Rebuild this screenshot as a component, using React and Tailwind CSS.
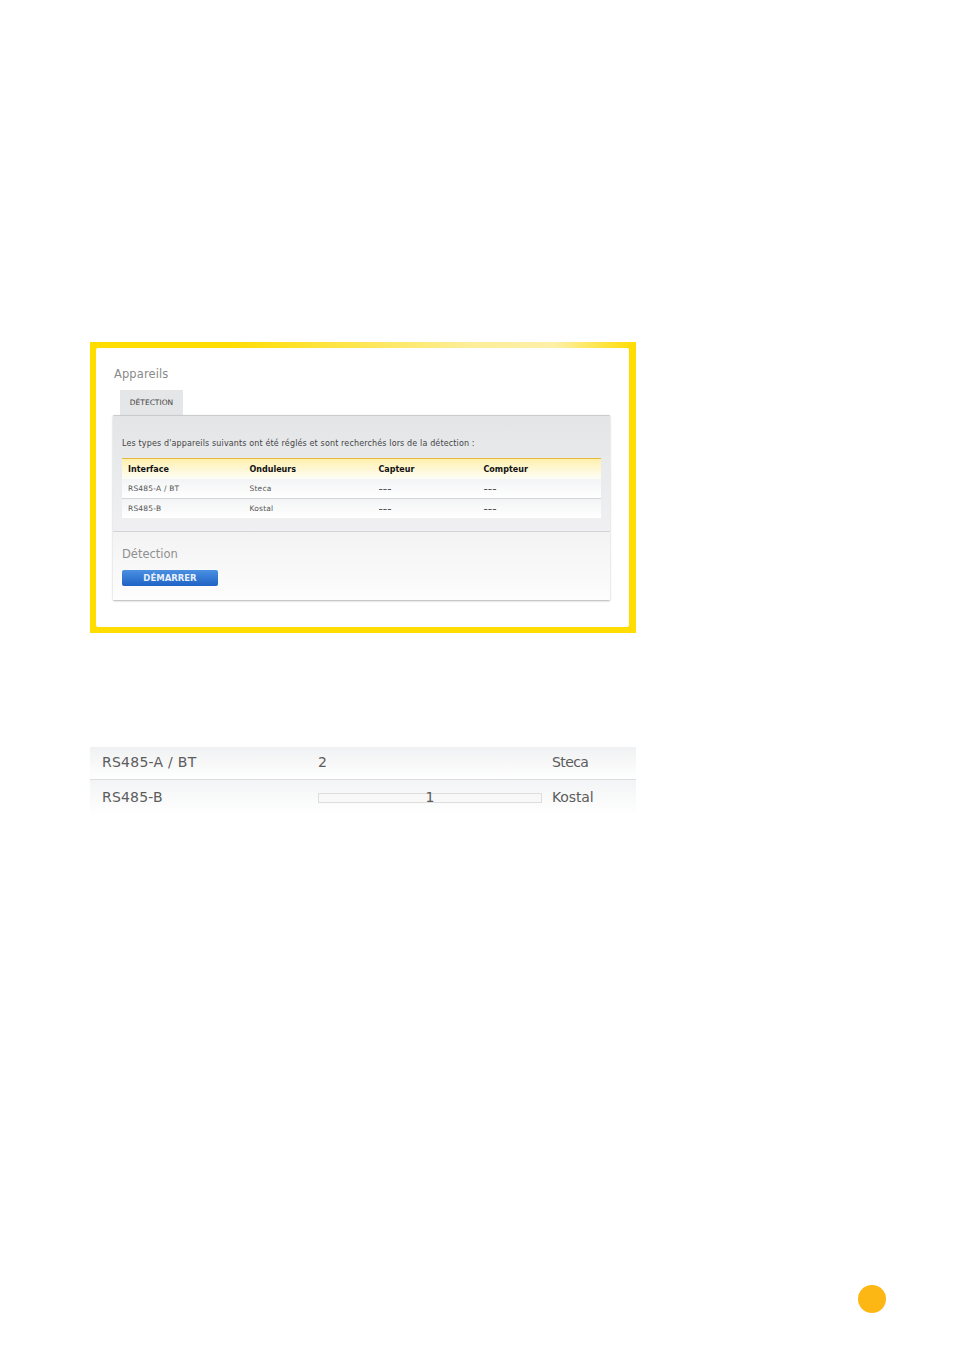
const FONT = "font-['DejaVu_Sans',sans-serif]";

const detectedDevices = [
  { iface: "RS485-A / BT", inverter: "Steca", sensor: "---", meter: "---" },
  { iface: "RS485-B", inverter: "Kostal", sensor: "---", meter: "---" },
];

const DeviceRow = ({ device, last }) => (
  <div
    className={`flex items-center bg-gradient-to-b from-[#f3f4f5] to-white text-[7.5px] tracking-[0.2px] text-[#555] ${
      last ? "h-[19px]" : "h-[20px] border-b border-[#d4d5d7]"
    }`}
  >
    <span className="w-[127.5px] pl-[6px]">{device.iface}</span>
    <span className="w-[129px]">{device.inverter}</span>
    <span className="w-[105px] text-[12px] leading-none tracking-normal">{device.sensor}</span>
    <span className="text-[12px] leading-none tracking-normal">{device.meter}</span>
  </div>
);

export default function App() {
  return (
    <div className={`${FONT} flex min-h-[1349px] w-[954px] flex-col bg-white pt-[342px]`}>
      {/* yellow framed screenshot */}
      <div className="ml-[90px] flex h-[291px] w-[546px] flex-col">
        <div className="h-[6px] bg-[linear-gradient(90deg,#ffdd00_0%,#ffdd00_25%,#fdee9a_70%,#fdf0a8_85%,#ffe64d_93%,#ffdd00_100%)]" />
        <div className="flex h-[285px] bg-[#ffdd00] pb-[6px] pl-[6px] pr-[7px]">
          <div className="flex h-[279px] w-[533px] flex-col rounded-[2px] bg-white pl-[17px] pr-[18px]">
            <h2 className="ml-[1px] mt-[19px] text-[11.5px] leading-[15px] tracking-[0.1px] text-[#8a8a8a]">Appareils</h2>
            <div className="ml-[7px] mt-[8px] flex h-[25px] w-[63px] items-center justify-center bg-[#e4e6e8] text-[7.5px] text-[#444]">
              DÉTECTION
            </div>
            <div className="flex h-[185px] w-[497px] flex-col rounded-[1px] border-t border-[#c9cbcd] bg-white shadow-[0_1px_2px_rgba(0,0,0,0.3)]">
              <div className="flex h-[116px] flex-col border-b border-[#d2d3d5] bg-gradient-to-b from-[#e3e5e7] to-[#f0f0f2] px-[9px] pt-[22px]">
                <p className="text-[8px] leading-[12px] tracking-[0.14px] text-[#444]">
                  Les types d'appareils suivants ont été réglés et sont recherchés lors de la détection :
                </p>
                <div className="mt-[8px] flex h-[21px] items-center border-t border-[#e4b93c] bg-gradient-to-b from-[#fff0ae] to-[#fdfdf6] pt-[1px] text-[8px] font-bold text-[#111]">
                  <span className="w-[127.5px] pl-[6px]">Interface</span>
                  <span className="w-[129px]">Onduleurs</span>
                  <span className="w-[105px]">Capteur</span>
                  <span>Compteur</span>
                </div>
                {detectedDevices.map((device, i) => (
                  <DeviceRow key={device.iface} device={device} last={i === detectedDevices.length - 1} />
                ))}
              </div>
              <div className="flex flex-1 flex-col bg-gradient-to-b from-[#f3f3f4] to-[#fdfdfd] px-[9px] pt-[14px]">
                <h3 className="text-[11.5px] leading-[16px] text-[#8f8f8f]">Détection</h3>
                <button className="mt-[8px] h-[16px] w-[96px] rounded-[2px] bg-gradient-to-b from-[#4a90e2] to-[#1f62c4] text-[8.5px] font-bold leading-[16px] text-[#e8f1fb]">
                  DÉMARRER
                </button>
              </div>
            </div>
          </div>
        </div>
      </div>

      {/* zoomed detail rows */}
      <div className="ml-[90px] mt-[114px] w-[546px] text-[14px] text-[#5c5c5c]">
        <div className="flex h-[33px] items-center border-b border-[#dcdddf] bg-gradient-to-b from-[#f0f1f2] to-white pb-[2px]">
          <span className="w-[228px] pl-[12px] tracking-[0.25px]">RS485-A / BT</span>
          <span className="w-[234px]">2</span>
          <span className="tracking-[-0.6px]">Steca</span>
        </div>
        <div className="flex h-[35px] items-center bg-gradient-to-b from-[#f3f4f5] to-white">
          <span className="w-[228px] pl-[12px] tracking-[0.2px]">RS485-B</span>
          <span className="flex h-[10px] w-[224px] items-center justify-center border border-[#dddddd] bg-[#f8f8f8] pb-[2px] leading-[10px]">
            1
          </span>
          <span className="ml-[10px] tracking-[-0.15px]">Kostal</span>
        </div>
      </div>

      <div className="ml-[858px] mt-[470px] h-[28px] w-[28px] rounded-full bg-[#fdb714]" />
    </div>
  );
}
